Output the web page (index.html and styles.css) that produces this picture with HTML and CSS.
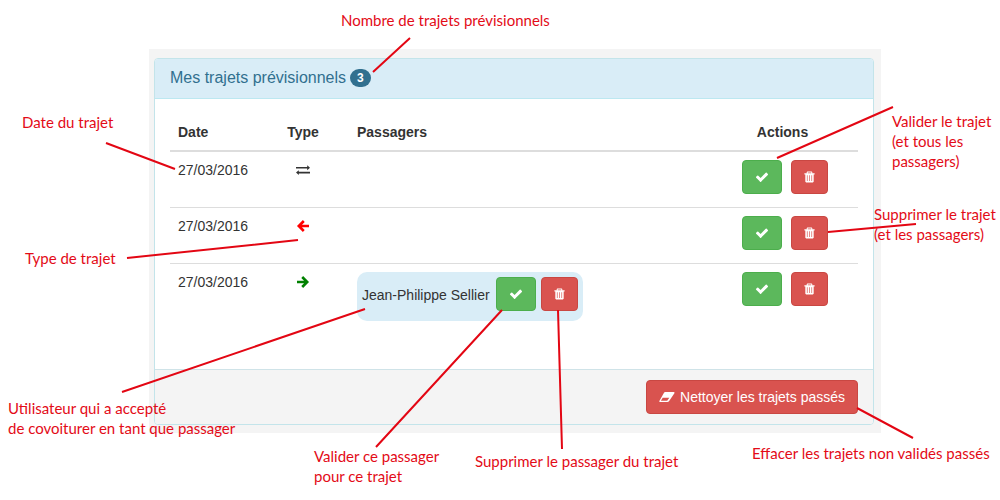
FILE: index.html
```html
<!DOCTYPE html>
<html lang="fr">
<head>
<meta charset="utf-8">
<title>Mes trajets prévisionnels</title>
<link rel="stylesheet" href="styles.css">
</head>
<body>
<svg class="symbols" aria-hidden="true">
  <symbol id="check" viewBox="0 0 1792 1792"><path d="M1671 566q0 40-28 68l-724 724-136 136q-28 28-68 28t-68-28l-136-136-362-362q-28-28-28-68t28-68l136-136q28-28 68-28t68 28l294 295 656-657q28-28 68-28t68 28l136 136q28 28 28 68z"/></symbol>
  <symbol id="trash" viewBox="0 0 14 14"><path fill-rule="evenodd" d="M4 3V1.700L4.700 1H9.300L10 1.700V3H12.500V4.200H11.500V12L10.600 13H3.400L2.500 12V4.200H1.500V3ZM5.100 3H8.900V2.100H5.100ZM4.200 5.200V11.200H4.900V5.200ZM6.650 5.200V11.200H7.350V5.200ZM9.100 5.200V11.200H9.800V5.200Z"/></symbol>
  <symbol id="arrow" viewBox="0 0 14 14"><path fill="none" stroke="currentColor" stroke-width="2.600" d="M7.800 2 2.800 7 7.800 12M3 7H13"/></symbol>
  <symbol id="exchange" viewBox="0 0 14 14"><path d="M0 4H11.200V2.300L14 4.800 11.200 7.200V5.600H0ZM14 8.800H2.800V7.200L0 9.600 2.800 12V10.400H14Z"/></symbol>
  <symbol id="eraser" viewBox="0 0 16 14"><path fill-rule="evenodd" d="M6.200 2H14.600Q16 2 15.400 3.300L10 11.200Q9.400 12 8.400 12H1.200Q-.1 12 .5 10.700L5 2.700Q5.400 2 6.200 2ZM3.700 7.700 1.900 10.800H8.200L10.300 7.700Z"/></symbol>
</svg>
<main class="figure">
  <div class="backdrop">
    <section class="panel">
      <h1 class="panel-heading">Mes trajets prévisionnels <span class="badge">3</span></h1>
      <div class="panel-body">
        <table class="trips">
          <thead>
            <tr><th class="date">Date</th><th class="type">Type</th><th class="passengers">Passagers</th><th class="actions">Actions</th></tr>
          </thead>
          <tbody>
            <tr>
              <td class="date">27/03/2016</td>
              <td class="type"><svg class="icon"><use href="#exchange"/></svg></td>
              <td class="passengers"></td>
              <td class="actions"><div class="buttons"><button class="btn success" aria-label="Valider le trajet"><svg class="icon"><use href="#check"/></svg></button><button class="btn danger" aria-label="Supprimer le trajet"><svg class="icon trash"><use href="#trash"/></svg></button></div></td>
            </tr>
            <tr>
              <td class="date">27/03/2016</td>
              <td class="type"><svg class="icon back"><use href="#arrow"/></svg></td>
              <td class="passengers"></td>
              <td class="actions"><div class="buttons"><button class="btn success" aria-label="Valider le trajet"><svg class="icon"><use href="#check"/></svg></button><button class="btn danger" aria-label="Supprimer le trajet"><svg class="icon trash"><use href="#trash"/></svg></button></div></td>
            </tr>
            <tr>
              <td class="date">27/03/2016</td>
              <td class="type"><svg class="icon forth"><use href="#arrow"/></svg></td>
              <td class="passengers"><div class="passenger"><span class="name">Jean-Philippe Sellier</span><button class="btn success" aria-label="Valider ce passager"><svg class="icon"><use href="#check"/></svg></button><button class="btn danger" aria-label="Supprimer le passager"><svg class="icon trash"><use href="#trash"/></svg></button></div></td>
              <td class="actions"><div class="buttons"><button class="btn success" aria-label="Valider le trajet"><svg class="icon"><use href="#check"/></svg></button><button class="btn danger" aria-label="Supprimer le trajet"><svg class="icon trash"><use href="#trash"/></svg></button></div></td>
            </tr>
          </tbody>
        </table>
      </div>
      <footer class="panel-footer"><button class="btn danger"><svg class="icon eraser"><use href="#eraser"/></svg>Nettoyer les trajets passés</button></footer>
    </section>
  </div>
  <svg class="lines" viewBox="0 0 1000 500" preserveAspectRatio="none" aria-hidden="true">
    <path d="M410 38 373 72M106 143 175 169M127 258 298 240M122 392 365 309M502 310 376 447M558 310 562 449M893 107 777 158M828 232 916 224M857 408 913 438"/>
  </svg>
  <p class="note note-count">Nombre de trajets prévisionnels</p>
  <p class="note note-date">Date du trajet</p>
  <p class="note note-type">Type de trajet</p>
  <p class="note note-user">Utilisateur qui a accepté<br>de covoiturer en tant que passager</p>
  <p class="note note-accept">Valider ce passager<br>pour ce trajet</p>
  <p class="note note-remove">Supprimer le passager du trajet</p>
  <p class="note note-validate">Valider le trajet<br>(et tous les<br>passagers)</p>
  <p class="note note-delete">Supprimer le trajet<br>(et les passagers)</p>
  <p class="note note-clean">Effacer les trajets non validés passés</p>
</main>
</body>
</html>
```

FILE: styles.css
```css
* { box-sizing: border-box; }
body {
  margin: 0;
  background: #fff;
  color: #333;
  font: 14px/20px "Liberation Sans", Arial, sans-serif;
}
.symbols { display: none; }
.figure {
  position: relative;
  min-height: 500px;
  padding: 49px 119px 67px 149px;
}
.backdrop { padding: 9px 7px 8px 5px; background: #f4f4f4; }
.panel {
  border: 1px solid #c3e4ea;
  border-radius: 4px;
  background: #fff;
  overflow: hidden;
}
.panel-heading {
  display: flex;
  align-items: center;
  gap: 4px;
  margin: 0;
  padding: 9px 15px 11px;
  border-bottom: 1px solid #bce8f1;
  background: #d9edf7;
  color: #31708f;
  font-size: 16px;
  font-weight: 400;
  line-height: 19px;
}
.badge {
  padding: 3px 7px;
  border-radius: 10px;
  background: #31708f;
  color: #fff;
  font-size: 12px;
  font-weight: 700;
  line-height: 12px;
}
.panel-body { padding: 15px; }
.trips {
  width: 100%;
  margin-bottom: 20px;
  border-spacing: 0;
  table-layout: fixed;
}
.trips th, .trips td { padding: 8px; text-align: left; vertical-align: top; }
.trips th { border-bottom: 2px solid #ddd; }
.trips tr + tr td { border-top: 1px solid #ddd; }
.trips .date { width: 99px; }
.trips .type { width: 68px; text-align: center; }
.trips .passengers { padding-left: 20px; }
.trips .actions { width: 124px; padding-right: 35px; }
.trips th.actions { text-align: center; }
.buttons { display: flex; gap: 9px; margin-bottom: 5px; }
.passenger {
  display: inline-flex;
  gap: 5px;
  margin-bottom: 5px;
  padding: 5px 5px 10px;
  border-radius: 10px;
  background: #d9edf7;
  vertical-align: top;
}
.name { padding: 8px 1px 0 0; white-space: nowrap; }
.btn {
  display: inline-flex;
  flex: none;
  align-items: center;
  justify-content: center;
  height: 34px;
  padding: 0 12px;
  border: 1px solid;
  border-radius: 4px;
  color: #fff;
  font: inherit;
}
.success { border-color: #4cae4c; background: #5cb85c; }
.danger { border-color: #c94742; background: #d9534f; }
.icon { flex: none; width: 14px; height: 14px; fill: currentColor; }
.type .icon { display: block; margin: 3px auto; }
.trash { width: 13px; margin: 0 -1px; }
.back { color: #f00; }
.forth { color: #008000; transform: scaleX(-1); }
.eraser { width: 16px; margin-right: 5px; }
.panel-footer {
  display: flex;
  justify-content: flex-end;
  padding: 10px 15px;
  border-top: 1px solid #cfe3e8;
  background: #f4f4f4;
}
.lines {
  position: absolute;
  top: 0;
  left: 0;
  width: 100%;
  height: 500px;
  fill: none;
  stroke: #e30613;
  stroke-width: 2;
  pointer-events: none;
}
.lines path { vector-effect: non-scaling-stroke; }
.note {
  position: absolute;
  margin: 0;
  color: #e30b17;
  font: 15px/20px Lato, Carlito, Calibri, sans-serif;
  white-space: nowrap;
}
.note-count { top: 10px; left: 34.1%; }
.note-date { top: 112px; left: 2.2%; }
.note-type { top: 248px; left: 2.5%; }
.note-user { top: 398px; left: 0.8%; }
.note-accept { top: 446px; left: 31.4%; }
.note-remove { top: 451px; left: 47.5%; }
.note-validate { top: 111px; left: 89.2%; }
.note-delete { top: 204px; left: 87.4%; }
.note-clean { top: 443px; left: 75.2%; }
```
